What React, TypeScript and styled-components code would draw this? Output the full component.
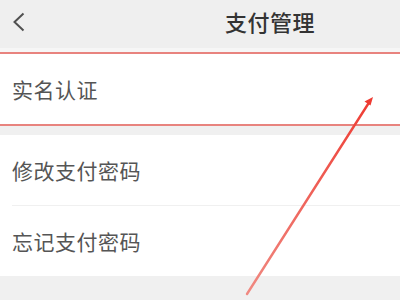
import { createGlobalStyle, styled } from 'styled-components'

const GlobalStyle = createGlobalStyle`
  html, body {
    margin: 0;
    padding: 0;
    background: #f0f0f0;
  }
  body {
    font-family: "Noto Sans CJK SC", "Noto Sans", sans-serif;
  }
`

type Item = {
  id: number
  label: string
  marked?: boolean
}

const groups: Item[][] = [
  [{ id: 1, label: '实名认证', marked: true }],
  [
    { id: 2, label: '修改支付密码' },
    { id: 3, label: '忘记支付密码' },
  ],
]

export default function App() {
  return <Page>
    <GlobalStyle />
    <Header>
      <BackButton type="button" aria-label="返回">
        <svg width="14" height="20" viewBox="0 0 14 20">
          <path d="M11.5 1.5 L2.5 10 L11.5 18.5" fill="none" stroke="#505050" strokeWidth="2" />
        </svg>
      </BackButton>
      <Title>支付管理</Title>
    </Header>
    <Body>
      {groups.map((group, i) => (
        <Group key={i}>
          {group.map((item, j) => (
            <Row key={item.id} $marked={!!item.marked} $divided={j > 0}>
              {item.label}
            </Row>
          ))}
        </Group>
      ))}
    </Body>
    <Arrow width="400" height="300" viewBox="0 0 400 300">
      <defs>
        <linearGradient id="fade" x1="372" y1="98" x2="247" y2="294" gradientUnits="userSpaceOnUse">
          <stop offset="0" stopColor="#ee3b32" />
          <stop offset="1" stopColor="#f08a82" />
        </linearGradient>
      </defs>
      <path d="M370 101 L247 294" stroke="url(#fade)" strokeWidth="2.4" strokeLinecap="round" fill="none" />
      <path d="M373 97 L364.5 101.5 L370.5 105.5 Z" fill="#ee3b32" />
    </Arrow>
  </Page>
}

const Page = styled.div`
  position: relative;
  width: 400px;
  height: 300px;
  overflow: hidden;
  background: #f0f0f0;
`
const Header = styled.div`
  height: 48px;
  display: grid;
  grid-template-columns: 40px 1fr;
  align-items: center;
  background: #efefef;
  border-bottom: 4px solid #f6f6f6;
`
const BackButton = styled.button`
  display: flex;
  align-items: center;
  justify-content: flex-start;
  padding: 0 0 0 12px;
  margin-top: -4px;
  background: transparent;
  border: none;
`
const Title = styled.div`
  padding-left: 185px;
  font-size: 22px;
  font-weight: 500;
  color: #333;
  letter-spacing: 0.5px;
  margin-top: -7px;
`
const Body = styled.div`
  display: flex;
  flex-direction: column;
  gap: 9px;
`
const Group = styled.div`
  display: flex;
  flex-direction: column;
  background: #fff;
`
const Row = styled.div<{ $marked: boolean, $divided: boolean }>`
  position: relative;
  height: 70px;
  display: flex;
  align-items: center;
  padding-left: 12px;
  font-size: 21px;
  color: #555;
  letter-spacing: 0.5px;
  border-top: ${p => p.$marked ? '2px solid #e8837e' : 'none'};
  border-bottom: ${p => p.$marked ? '2px solid #e8837e' : 'none'};
  margin-top: ${p => p.$divided ? '1px' : '0'};

  &::before {
    content: '';
    display: ${p => p.$divided ? 'block' : 'none'};
    position: absolute;
    left: 12px;
    right: 0;
    top: -1px;
    height: 1px;
    background: #f0f0f0;
  }
`
const Arrow = styled.svg`
  position: absolute;
  left: 0;
  top: 0;
  pointer-events: none;
`
